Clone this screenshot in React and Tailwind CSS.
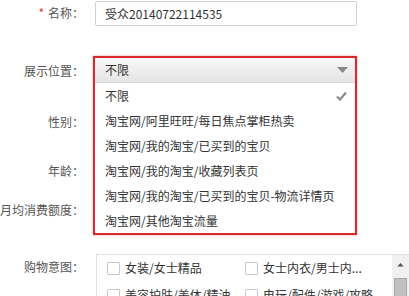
import React from "react";

const font = { fontFamily: '"Noto Sans CJK SC", "Noto Sans", sans-serif' };

function Label({ children, star }) {
  return (
    <div className="w-[85px] shrink-0 flex justify-end whitespace-nowrap text-[12px] text-[#555] pr-[1px]">
      {star && <span className="text-[#e23b3b] mr-[4px]">*</span>}
      <span>{children}</span>
    </div>
  );
}

const options = [
  "不限",
  "淘宝网/阿里旺旺/每日焦点掌柜热卖",
  "淘宝网/我的淘宝/已买到的宝贝",
  "淘宝网/我的淘宝/收藏列表页",
  "淘宝网/我的淘宝/已买到的宝贝-物流详情页",
  "淘宝网/其他淘宝流量",
];

function Checkbox({ label }) {
  return (
    <div className="flex items-center gap-[5px] w-[138px]">
      <div className="w-[13px] h-[13px] border border-[#c8c8c8] bg-white rounded-[1px] shrink-0" />
      <span className="text-[12px] text-[#333] whitespace-nowrap">{label}</span>
    </div>
  );
}

export default function App() {
  return (
    <div style={font} className="relative w-[409px] h-[296px] overflow-hidden bg-white">
      {/* name row */}
      <div className="flex items-center h-[26px] mt-0">
        <Label star>名称：</Label>
        <div className="ml-[10px] w-[262px] h-[25px] mt-[1px] border border-[#d0d0d0] rounded-[2px] flex items-center pl-[9px] text-[12px] text-[#333]">
          受众20140722114535
        </div>
      </div>

      <div className="flex items-center h-[20px] mt-[35px]">
        <Label>展示位置：</Label>
      </div>
      <div className="flex items-center h-[20px] mt-[31px]">
        <Label>性别：</Label>
      </div>
      <div className="flex items-center h-[20px] mt-[29px]">
        <Label>年龄：</Label>
      </div>
      <div className="flex items-center h-[20px] mt-[19px]">
        <Label>月均消费额度：</Label>
      </div>

      {/* 购物意图 */}
      <div className="flex mt-[34px]">
        <div className="pt-[4px]">
          <Label>购物意图：</Label>
        </div>
        <div className="ml-[11px] flex-1 h-[60px] border border-[#e0e0e0] border-r-0 flex">
          <div className="flex-1 pl-[10px] pt-[4px] flex flex-col gap-[9px]">
            <div className="flex">
              <Checkbox label="女装/女士精品" />
              <Checkbox label="女士内衣/男士内..." />
            </div>
            <div className="flex">
              <Checkbox label="美容护肤/美体/精油" />
              <Checkbox label="电玩/配件/游戏/攻略" />
            </div>
          </div>
          <div className="w-[17px] bg-[#f1f1f1] flex flex-col items-center pt-[8px]">
            <svg width="7" height="4" viewBox="0 0 7 4">
              <path d="M0 4 L3.5 0 L7 4 Z" fill="#505050" />
            </svg>
            <div className="mt-[11px] w-[13px] h-[40px] bg-[#c1c1c1] border border-[#a8a8a8]" />
          </div>
        </div>
      </div>

      {/* dropdown overlay */}
      <div className="absolute left-[93px] top-[56px] w-[264px] border-2 border-[#d92b2b] bg-white shadow-[0_0_2px_rgba(220,40,40,0.5)]">
        <div className="h-[25px] flex items-center justify-between pl-[10px] pr-[7px] bg-gradient-to-b from-[#f7f7f7] to-[#e5e5e5] border-b border-[#d8d8d8] text-[12px] text-[#333]">
          <span>不限</span>
          <svg width="11" height="6" viewBox="0 0 11 6">
            <path d="M0 0 L11 0 L5.5 6 Z" fill="#888" />
          </svg>
        </div>
        {options.map((o, i) => (
          <div key={i} className="h-[25px] flex items-center justify-between pl-[10px] pr-[8px] text-[12px] text-[#333]">
            <span>{o}</span>
            {i === 0 && (
              <svg width="11" height="10" viewBox="0 0 11 10">
                <path d="M1 5.5 L4 8.5 L10 1.5" stroke="#8a8a8a" strokeWidth="2.2" fill="none" />
              </svg>
            )}
          </div>
        ))}
      </div>
    </div>
  );
}
